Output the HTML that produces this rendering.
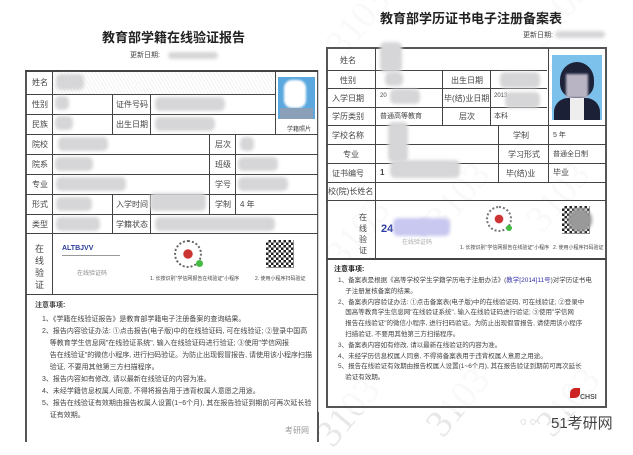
<!DOCTYPE html>
<html><head><meta charset="utf-8"><style>
*{margin:0;padding:0;box-sizing:border-box}
body{width:633px;height:452px;background:#fff;position:relative;overflow:hidden;font-family:"Liberation Sans","Noto Sans CJK SC",sans-serif;color:#333}
.a{position:absolute}
.t{position:absolute;font-size:8px;color:#444;white-space:nowrap}
.h{background:#444}
.v{background:#444}
.b{position:absolute;background:#d6d6d8;border-radius:5px;filter:blur(1.5px)}
.wm{position:absolute;font-family:"Liberation Serif",serif;font-size:38px;color:#e8e8e8;transform:rotate(-50deg);white-space:nowrap}
.n{position:absolute;font-size:7px;color:#444;white-space:nowrap;line-height:11px}
</style></head><body>
<div class="wm" style="left:320px;top:0px">3103</div>
<div class="wm" style="left:520px;top:-10px">3103</div>
<div class="wm" style="left:320px;top:210px">3103</div>
<div class="wm" style="left:420px;top:175px">3103</div>
<div class="wm" style="left:520px;top:175px">3103</div>
<div class="wm" style="left:310px;top:390px">3103</div>
<div class="wm" style="left:420px;top:380px">3103</div>
<div class="wm" style="left:530px;top:380px">3103</div>

<div class="a" style="left:0;top:0;width:318px;height:452px;background:#fff"></div>
<div class="a" style="left:102px;top:27px;font-size:13px;font-weight:bold;color:#222">教育部学籍在线验证报告</div>
<div class="t" style="left:130px;top:50px;font-size:7px">更新日期:</div>
<div class="b" style="left:168px;top:52px;width:50px;height:7px"></div>
<div class="a" style="left:52px;top:71px;width:223px;height:23px;background:repeating-linear-gradient(60deg,#f2f2f2 0 1px,#fff 1px 3px)"></div>
<div class="a" style="left:25px;top:70px;width:2px;height:372px;background:#555"></div>
<div class="a" style="left:317px;top:70px;width:2px;height:372px;background:#555"></div>
<div class="a h" style="left:25px;top:70px;width:294px;height:2px"></div>
<div class="a h" style="left:26px;top:94px;width:249px;height:1px"></div>
<div class="a h" style="left:26px;top:114px;width:249px;height:1px"></div>
<div class="a h" style="left:26px;top:134px;width:292px;height:1px"></div>
<div class="a h" style="left:26px;top:154px;width:292px;height:1px"></div>
<div class="a h" style="left:26px;top:174px;width:292px;height:1px"></div>
<div class="a h" style="left:26px;top:194px;width:292px;height:1px"></div>
<div class="a h" style="left:26px;top:214px;width:292px;height:1px"></div>
<div class="a h" style="left:26px;top:233px;width:292px;height:1px"></div>
<div class="a h" style="left:26px;top:294px;width:292px;height:1px"></div>
<div class="a v" style="left:52px;top:70px;width:1px;height:224px"></div>
<div class="a v" style="left:112px;top:94px;width:1px;height:40px"></div>
<div class="a v" style="left:150px;top:94px;width:1px;height:40px"></div>
<div class="a v" style="left:112px;top:194px;width:1px;height:40px"></div>
<div class="a v" style="left:150px;top:194px;width:1px;height:40px"></div>
<div class="a v" style="left:209px;top:134px;width:1px;height:80px"></div>
<div class="a v" style="left:235px;top:134px;width:1px;height:80px"></div>
<div class="a v" style="left:275px;top:70px;width:1px;height:64px"></div>
<div class="a" style="left:278px;top:77px;width:37px;height:42px;background:#5aa8dd"></div>
<div class="a" style="left:284px;top:80px;width:22px;height:28px;background:#fff;border-radius:8px;filter:blur(1px)"></div>
<div class="a" style="left:280px;top:108px;width:33px;height:11px;background:#8aa0b8"></div>
<div class="t" style="left:287px;top:124px;font-size:6px">学籍照片</div>
<div class="t" style="left:32px;top:77px">姓名</div>
<div class="t" style="left:32px;top:99px">性别</div>
<div class="t" style="left:32px;top:119px">民族</div>
<div class="t" style="left:32px;top:139px">院校</div>
<div class="t" style="left:32px;top:159px">院系</div>
<div class="t" style="left:32px;top:179px">专业</div>
<div class="t" style="left:32px;top:199px">形式</div>
<div class="t" style="left:32px;top:219px">类型</div>
<div class="t" style="left:116px;top:99px">证件号码</div>
<div class="t" style="left:116px;top:119px">出生日期</div>
<div class="t" style="left:116px;top:199px">入学时间</div>
<div class="t" style="left:116px;top:219px">学籍状态</div>
<div class="t" style="left:215px;top:139px">层次</div>
<div class="t" style="left:215px;top:159px">班级</div>
<div class="t" style="left:215px;top:179px">学号</div>
<div class="t" style="left:215px;top:199px">学制</div>
<div class="t" style="left:240px;top:199px">4 年</div>
<div class="b" style="left:56px;top:74px;width:28px;height:16px"></div>
<div class="b" style="left:55px;top:96px;width:14px;height:14px"></div>
<div class="b" style="left:55px;top:116px;width:18px;height:14px"></div>
<div class="b" style="left:155px;top:97px;width:70px;height:14px"></div>
<div class="b" style="left:155px;top:117px;width:60px;height:14px"></div>
<div class="b" style="left:58px;top:137px;width:50px;height:14px"></div>
<div class="b" style="left:55px;top:157px;width:38px;height:14px"></div>
<div class="b" style="left:56px;top:177px;width:70px;height:14px"></div>
<div class="b" style="left:56px;top:197px;width:36px;height:14px"></div>
<div class="b" style="left:56px;top:217px;width:44px;height:14px"></div>
<div class="b" style="left:240px;top:137px;width:14px;height:14px"></div>
<div class="b" style="left:238px;top:157px;width:40px;height:14px"></div>
<div class="b" style="left:238px;top:177px;width:50px;height:14px"></div>
<div class="b" style="left:150px;top:193px;width:56px;height:18px"></div>
<div class="b" style="left:155px;top:217px;width:120px;height:14px"></div>
<div class="t" style="left:35px;top:243px;font-size:9px;line-height:12px;width:10px;white-space:normal">在线验证</div>
<div class="t" style="left:62px;top:245px;font-size:7px;color:#2a3a9a;font-weight:bold">ALTBJVV</div>
<div class="a" style="left:62px;top:255px;width:58px;height:1px;background:#999"></div>
<div class="t" style="left:77px;top:268px;font-size:6px;color:#888">在线验证码</div>
<div class="a" style="left:174px;top:240px;width:28px;height:28px;border-radius:50%;border:2px dotted #666;background:radial-gradient(#c33 25%,#fff 30%)"></div>
<div class="a" style="left:196px;top:260px;width:7px;height:7px;border-radius:50%;background:#4b4"></div>
<div class="t" style="left:150px;top:275px;font-size:5px">1. 长按识别"学信网报告在线验证"小程序</div>
<div class="a" style="left:266px;top:240px;width:28px;height:28px;background:repeating-conic-gradient(#222 0 25%,#fff 0 50%) 0 0/5px 5px"></div>
<div class="t" style="left:255px;top:275px;font-size:5px">2. 使用小程序扫码验证</div>
<div class="n" style="left:35px;top:300px;font-weight:bold">注意事项:</div>
<div class="n" style="left:42px;top:314px;line-height:12px">1、《学籍在线验证报告》是教育部学籍电子注册备案的查询结果。<br>2、报告内容验证办法: ①点击报告(电子版)中的在线验证码, 可在线验证; ②登录中国高<br>&nbsp;&nbsp;&nbsp;&nbsp;等教育学生信息网"在线验证系统", 输入在线验证码进行验证; ③使用"学信网报<br>&nbsp;&nbsp;&nbsp;&nbsp;告在线验证"的微信小程序, 进行扫码验证。为防止出现假冒报告, 请使用该小程序扫描<br>&nbsp;&nbsp;&nbsp;&nbsp;验证, 不要用其他第三方扫描程序。<br>3、报告内容如有修改, 请以最新在线验证的内容为准。<br>4、未经学籍信息权属人同意, 不得将报告用于违背权属人意愿之用途。<br>5、报告在线验证有效期由报告权属人设置(1~6个月), 其在报告验证到期前可再次延长验<br>&nbsp;&nbsp;&nbsp;&nbsp;证有效期。</div>
<div class="t" style="left:285px;top:425px;color:#999">考研网</div>

<div class="a" style="left:318px;top:0;width:290px;height:412px;background:rgba(255,255,255,0.75)"></div>
<div class="a" style="left:380px;top:8px;font-size:13px;font-weight:bold;color:#222">教育部学历证书电子注册备案表</div>
<div class="t" style="left:523px;top:30px;font-size:7px">更新日期:</div>
<div class="b" style="left:555px;top:31px;width:50px;height:7px"></div>
<div class="a" style="left:326px;top:47px;width:281px;height:361px;border:2px solid #555"></div>
<div class="a h" style="left:327px;top:70px;width:220px;height:1px"></div>
<div class="a h" style="left:327px;top:88px;width:220px;height:1px"></div>
<div class="a h" style="left:327px;top:107px;width:220px;height:1px"></div>
<div class="a h" style="left:327px;top:125px;width:279px;height:1px"></div>
<div class="a h" style="left:327px;top:144px;width:279px;height:1px"></div>
<div class="a h" style="left:327px;top:163px;width:279px;height:1px"></div>
<div class="a h" style="left:327px;top:182px;width:279px;height:1px"></div>
<div class="a h" style="left:327px;top:200px;width:279px;height:1px"></div>
<div class="a h" style="left:327px;top:258px;width:279px;height:2px"></div>
<div class="a v" style="left:375px;top:48px;width:1px;height:210px"></div>
<div class="a v" style="left:442px;top:70px;width:1px;height:55px"></div>
<div class="a v" style="left:490px;top:70px;width:1px;height:55px"></div>
<div class="a v" style="left:498px;top:125px;width:1px;height:57px"></div>
<div class="a v" style="left:548px;top:48px;width:1px;height:134px"></div>
<div class="a" style="left:552px;top:55px;width:50px;height:65px;background:#7cc0ec"></div>
<div class="a" style="left:560px;top:62px;width:34px;height:36px;border-radius:50% 50% 40% 40%;background:#1d2238"></div>
<div class="a" style="left:566px;top:74px;width:22px;height:24px;background:#b8b4c4;filter:blur(1px)"></div>
<div class="a" style="left:554px;top:98px;width:46px;height:22px;border-radius:14px 14px 0 0;background:#1b2036"></div>
<div class="a" style="left:570px;top:98px;width:14px;height:22px;background:#eee"></div>
<div class="t" style="left:340px;top:55px">姓名</div>
<div class="t" style="left:340px;top:75px">性别</div>
<div class="t" style="left:332px;top:93px">入学日期</div>
<div class="t" style="left:332px;top:111px">学历类别</div>
<div class="t" style="left:332px;top:130px">学校名称</div>
<div class="t" style="left:343px;top:149px">专业</div>
<div class="t" style="left:332px;top:168px">证书编号</div>
<div class="t" style="left:328px;top:186px">校(院)长姓名</div>
<div class="t" style="left:451px;top:75px">出生日期</div>
<div class="t" style="left:444px;top:93px">毕(结)业日期</div>
<div class="t" style="left:459px;top:111px">层次</div>
<div class="t" style="left:513px;top:130px">学制</div>
<div class="t" style="left:508px;top:149px">学习形式</div>
<div class="t" style="left:506px;top:168px">毕(结)业</div>
<div class="t" style="left:380px;top:93px;font-size:6px">20</div>
<div class="t" style="left:494px;top:93px;font-size:6px">2013-</div>
<div class="t" style="left:380px;top:111px;font-size:7px">普通高等教育</div>
<div class="t" style="left:494px;top:111px;font-size:7px">本科</div>
<div class="t" style="left:553px;top:130px;font-size:7px">5 年</div>
<div class="t" style="left:553px;top:149px;font-size:7px">普通全日制</div>
<div class="t" style="left:553px;top:167px">毕业</div>
<div class="t" style="left:380px;top:168px;font-weight:bold">1</div>
<div class="b" style="left:380px;top:42px;width:22px;height:30px"></div>
<div class="b" style="left:385px;top:72px;width:18px;height:14px"></div>
<div class="b" style="left:390px;top:89px;width:30px;height:15px"></div>
<div class="b" style="left:500px;top:72px;width:40px;height:16px"></div>
<div class="b" style="left:505px;top:92px;width:35px;height:16px"></div>
<div class="b" style="left:388px;top:122px;width:20px;height:40px"></div>
<div class="b" style="left:390px;top:160px;width:70px;height:18px"></div>
<div class="t" style="left:359px;top:212px;font-size:8px;line-height:11px;width:10px;white-space:normal">在线验证</div>
<div class="t" style="left:381px;top:223px;font-size:11px;color:#2a3aa0;font-weight:bold">24</div>
<div class="b" style="left:393px;top:218px;width:35px;height:18px;background:#c8c8f0"></div>
<div class="b" style="left:420px;top:218px;width:30px;height:18px;background:#c8c8f0"></div>
<div class="t" style="left:402px;top:237px;font-size:6px;color:#aaa">在线验证码</div>
<div class="a" style="left:486px;top:206px;width:26px;height:26px;border-radius:50%;border:2px dotted #777;background:radial-gradient(#c33 25%,#fff 30%)"></div>
<div class="a" style="left:506px;top:225px;width:6px;height:6px;border-radius:50%;background:#4b4"></div>
<div class="t" style="left:460px;top:244px;font-size:5px">1. 长按识别"学信网报告在线验证"小程序</div>
<div class="a" style="left:562px;top:206px;width:28px;height:28px;background:repeating-conic-gradient(#222 0 25%,#fff 0 50%) 0 0/5px 5px"></div>
<div class="b" style="left:568px;top:208px;width:24px;height:24px;border-radius:50%;background:#999"></div>
<div class="t" style="left:553px;top:244px;font-size:5px">2. 使用小程序扫码验证</div>
<div class="n" style="left:334px;top:264px;font-weight:bold;color:#222">注意事项:</div>
<div class="n" style="left:338px;top:276px;font-size:6.5px;line-height:10.8px">1、备案表是根据《高等学校学生学籍学历电子注册办法》(<span style="color:#33a">教学[2014]11号</span>)对学历证书电<br>&nbsp;&nbsp;&nbsp;&nbsp;子注册复核备案的结果。<br>2、备案表内容验证办法: ①点击备案表(电子版)中的在线验证码, 可在线验证; ②登录中<br>&nbsp;&nbsp;&nbsp;&nbsp;国高等教育学生信息网"在线验证系统", 输入在线验证码进行验证; ③使用"学信网<br>&nbsp;&nbsp;&nbsp;&nbsp;报告在线验证"的微信小程序, 进行扫码验证。为防止出现假冒报告, 请使用该小程序<br>&nbsp;&nbsp;&nbsp;&nbsp;扫描验证, 不要用其他第三方扫描程序。<br>3、备案表内容如有修改, 请以最新在线验证的内容为准。<br>4、未经学历信息权属人同意, 不得将备案表用于违背权属人意愿之用途。<br>5、报告在线验证有效期由报告权属人设置(1~6个月), 其在报告验证到期前可再次延长<br>&nbsp;&nbsp;&nbsp;&nbsp;验证有效期。</div>
<div class="a" style="left:570px;top:388px;width:10px;height:10px;border-radius:50% 0;background:#c22"></div>
<div class="t" style="left:580px;top:394px;font-size:7px;font-weight:bold;color:#555">CHSI</div>
<div class="t" style="left:520px;top:416px;font-size:11px;color:#999">◌ ◌</div>
<div class="t" style="left:551px;top:412px;font-size:15px;color:#444">51考研网</div>
</body></html>
